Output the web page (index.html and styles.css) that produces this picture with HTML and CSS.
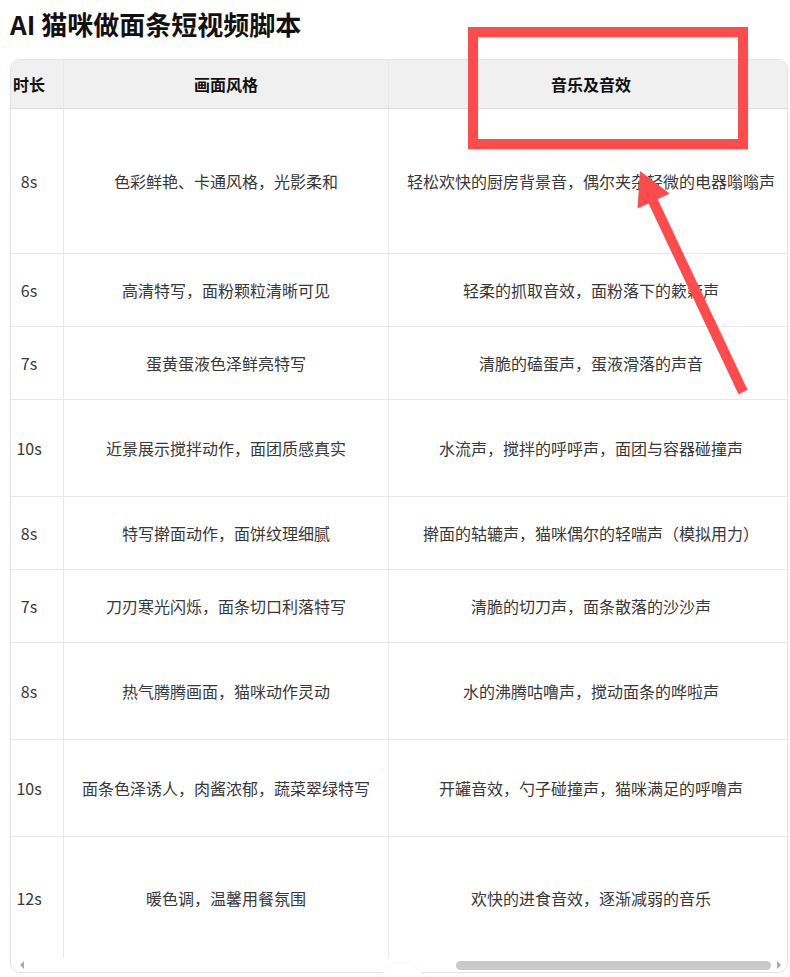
FILE: index.html
```html
<!DOCTYPE html>
<html lang="zh-CN">
<head>
<meta charset="utf-8">
<title>AI 猫咪做面条短视频脚本</title>
<link rel="stylesheet" href="styles.css">
</head>
<body>
<h1 class="title">AI 猫咪做面条短视频脚本</h1>
<div class="table-wrap">
  <div class="viewport">
    <div class="grid">
      <div class="cell head c-time">时长</div>
      <div class="cell head c-style">画面风格</div>
      <div class="cell head c-audio">音乐及音效</div>

      <div class="cell c-time">8s</div>
      <div class="cell c-style">色彩鲜艳、卡通风格，光影柔和</div>
      <div class="cell c-audio">轻松欢快的厨房背景音，偶尔夹杂轻微的电器嗡嗡声</div>

      <div class="cell c-time">6s</div>
      <div class="cell c-style">高清特写，面粉颗粒清晰可见</div>
      <div class="cell c-audio">轻柔的抓取音效，面粉落下的簌簌声</div>

      <div class="cell c-time">7s</div>
      <div class="cell c-style">蛋黄蛋液色泽鲜亮特写</div>
      <div class="cell c-audio">清脆的磕蛋声，蛋液滑落的声音</div>

      <div class="cell c-time">10s</div>
      <div class="cell c-style">近景展示搅拌动作，面团质感真实</div>
      <div class="cell c-audio">水流声，搅拌的呼呼声，面团与容器碰撞声</div>

      <div class="cell c-time">8s</div>
      <div class="cell c-style">特写擀面动作，面饼纹理细腻</div>
      <div class="cell c-audio">擀面的轱辘声，猫咪偶尔的轻喘声（模拟用力）</div>

      <div class="cell c-time">7s</div>
      <div class="cell c-style">刀刃寒光闪烁，面条切口利落特写</div>
      <div class="cell c-audio">清脆的切刀声，面条散落的沙沙声</div>

      <div class="cell c-time">8s</div>
      <div class="cell c-style">热气腾腾画面，猫咪动作灵动</div>
      <div class="cell c-audio">水的沸腾咕噜声，搅动面条的哗啦声</div>

      <div class="cell c-time">10s</div>
      <div class="cell c-style">面条色泽诱人，肉酱浓郁，蔬菜翠绿特写</div>
      <div class="cell c-audio">开罐音效，勺子碰撞声，猫咪满足的呼噜声</div>

      <div class="cell c-time last">12s</div>
      <div class="cell c-style last">暖色调，温馨用餐氛围</div>
      <div class="cell c-audio last">欢快的进食音效，逐渐减弱的音乐</div>
    </div>
  </div>
  <div class="hscroll">
    <span class="arrow arrow-left"></span>
    <div class="track"><div class="thumb" style="margin-left:426px;width:315px"></div></div>
    <span class="arrow arrow-right"></span>
  </div>
</div>
<div class="bump"></div>
<svg class="annot" width="790" height="977" viewBox="0 0 790 977" xmlns="http://www.w3.org/2000/svg">
  <rect x="473" y="32" width="270" height="112" fill="none" stroke="#ff4b4b" stroke-width="10"/>
  <line x1="743" y1="392" x2="652" y2="199" stroke="#ff4b4b" stroke-width="10" stroke-linecap="butt"/>
  <polygon points="640,171 637.5,208.5 669.5,193.5" fill="#ff4b4b"/>
</svg>
</body>
</html>
```

FILE: styles.css
```css
html, body {
  margin: 0;
  padding: 0;
  background: #ffffff;
}

body {
  position: relative;
  width: 790px;
  height: 977px;
  overflow: hidden;
  font-family: "Noto Sans CJK SC", "Noto Sans", sans-serif;
  color: #333333;
}

.title {
  margin: 7px 0 18px 10px;
  height: 34px;
  line-height: 34px;
  font-size: 26px;
  font-weight: 700;
  color: #111111;
}

.table-wrap {
  margin-left: 10px;
  width: 776px;
  border: 1px solid #e2e2e2;
  border-radius: 10px;
  overflow: hidden;
  background: #ffffff;
}

.viewport {
  overflow: hidden;
}

.grid {
  margin-left: -16px;
  display: grid;
  grid-template-columns: 69px 325px 404px;
  grid-template-rows: 49px 145px 73px 73px 97px 73px 73px 97px 97px 121px;
  width: 798px;
}

.cell {
  box-sizing: border-box;
  display: flex;
  align-items: center;
  justify-content: center;
  border-right: 1px solid #e8e8e8;
  border-bottom: 1px solid #e8e8e8;
  font-size: 16px;
  line-height: 24px;
  color: #383838;
  white-space: nowrap;
}

.cell.head {
  background: #f0f0f0;
  border-bottom-color: #dcdcdc;
  font-weight: 700;
  color: #111111;
}

.cell.c-audio {
  border-right: none;
}

.cell.last {
  border-bottom: none;
}

.hscroll {
  height: 14px;
  display: flex;
  align-items: center;
  padding: 0 8px 0 9px;
}

.arrow {
  width: 0;
  height: 0;
  border-top: 4px solid transparent;
  border-bottom: 4px solid transparent;
}

.arrow-left {
  border-right: 4px solid #a8a8a8;
}

.arrow-right {
  border-left: 4px solid #a8a8a8;
}

.track {
  flex: 1;
  height: 9px;
  margin: 0 6px;
  display: flex;
}

.thumb {
  height: 9px;
  border-radius: 5px;
  background: #c9c9c9;
}

.bump {
  position: absolute;
  left: 377px;
  top: 963px;
  width: 50px;
  height: 50px;
  border-radius: 50%;
  background: #ffffff;
  box-shadow: 0 0 3px rgba(0, 0, 0, 0.06);
}

.annot {
  position: absolute;
  left: 0;
  top: 0;
  pointer-events: none;
}
```
